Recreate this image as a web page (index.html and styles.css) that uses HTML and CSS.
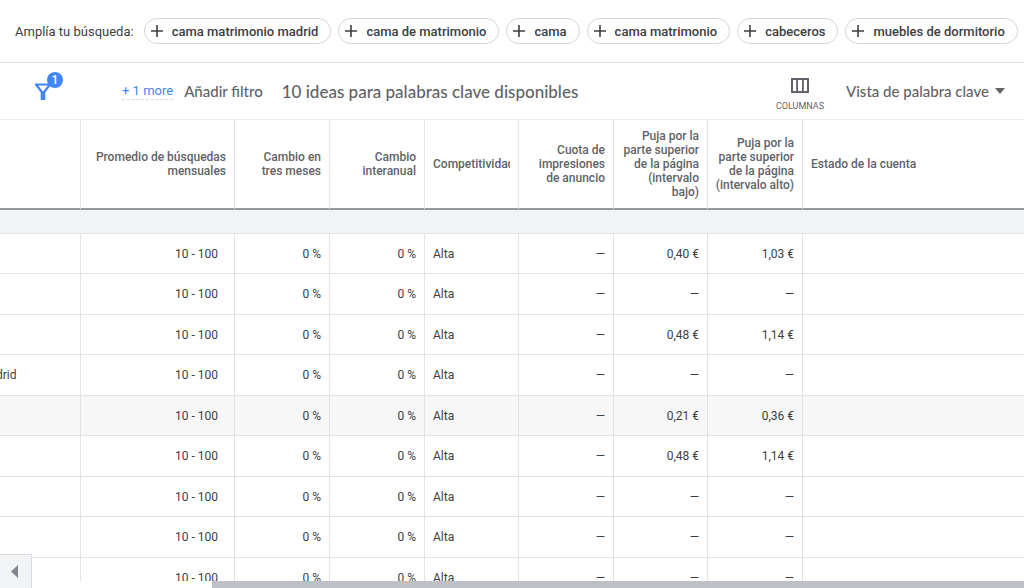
FILE: index.html
```html
<!DOCTYPE html>
<html lang="es">
<head>
    <meta charset="UTF-8">
    <meta name="viewport" content="width=device-width, initial-scale=1.0">
    <title>Ideas para palabras clave</title>
    <link rel="stylesheet" href="styles.css">
</head>
<body>
    <div class="suggestions">
        <span class="suggestions-label">Amplía tu búsqueda:</span>
        <button type="button" class="chip"><svg class="plus" viewBox="0 0 12 12"><path d="M6 0v12M0 6h12"/></svg>cama matrimonio madrid</button>
        <button type="button" class="chip"><svg class="plus" viewBox="0 0 12 12"><path d="M6 0v12M0 6h12"/></svg>cama de matrimonio</button>
        <button type="button" class="chip"><svg class="plus" viewBox="0 0 12 12"><path d="M6 0v12M0 6h12"/></svg>cama</button>
        <button type="button" class="chip"><svg class="plus" viewBox="0 0 12 12"><path d="M6 0v12M0 6h12"/></svg>cama matrimonio</button>
        <button type="button" class="chip"><svg class="plus" viewBox="0 0 12 12"><path d="M6 0v12M0 6h12"/></svg>cabeceros</button>
        <button type="button" class="chip"><svg class="plus" viewBox="0 0 12 12"><path d="M6 0v12M0 6h12"/></svg>muebles de dormitorio</button>
    </div>

    <div class="toolbar">
        <button type="button" class="filter-btn" aria-label="Filtros">
            <svg viewBox="0 0 16 17">
                <path fill-rule="evenodd" d="M0 .5h16v1.500L10.300 9.500V17H5.700V9.500L0 2zM3.200 2.500L8 8.600l4.800-6.100z"/>
            </svg>
            <span class="badge">1</span>
        </button>
        <a href="#" class="more-link">+ 1 more</a>
        <button type="button" class="add-filter">Añadir filtro</button>
        <h1 class="title">10 ideas para palabras clave disponibles</h1>
        <button type="button" class="columns-btn">
            <svg viewBox="0 0 18 15">
                <path fill-rule="evenodd" d="M0 0h18v15H0zM2 2v11h3.200V2zM7 2v11h4V2zM12.800 2v11H16V2z"/>
            </svg>
            COLUMNAS
        </button>
        <div class="view">
            <select class="view-select" aria-label="Vista">
                <option>Vista de palabra clave</option>
            </select>
            <svg class="caret" viewBox="0 0 10 6"><path d="M0 0h10L5 6z"/></svg>
        </div>
    </div>

    <div class="table-area">
        <table class="keywords">
            <colgroup>
                <col class="col-keyword">
                <col class="col-average">
                <col class="col-metric">
                <col class="col-metric">
                <col class="col-narrow">
                <col class="col-metric">
                <col class="col-narrow">
                <col class="col-metric">
                <col>
            </colgroup>
            <thead>
                <tr>
                    <th></th>
                    <th>Promedio de búsquedas mensuales</th>
                    <th>Cambio en tres meses</th>
                    <th>Cambio interanual</th>
                    <th class="left"><div class="clip">Competitividad</div></th>
                    <th>Cuota de impresiones de anuncio</th>
                    <th>Puja por la parte superior de la página (intervalo bajo)</th>
                    <th>Puja por la parte superior de la página (intervalo alto)</th>
                    <th class="left">Estado de la cuenta</th>
                </tr>
                <tr class="group">
                    <td colspan="9"></td>
                </tr>
            </thead>
            <tbody>
                <tr><td></td><td class="average">10 - 100</td><td>0 %</td><td>0 %</td><td class="left">Alta</td><td>—</td><td>0,40 €</td><td>1,03 €</td><td></td></tr>
                <tr><td></td><td class="average">10 - 100</td><td>0 %</td><td>0 %</td><td class="left">Alta</td><td>—</td><td>—</td><td>—</td><td></td></tr>
                <tr><td></td><td class="average">10 - 100</td><td>0 %</td><td>0 %</td><td class="left">Alta</td><td>—</td><td>0,48 €</td><td>1,14 €</td><td></td></tr>
                <tr><td class="keyword"><div class="keyword-end">drid</div></td><td class="average">10 - 100</td><td>0 %</td><td>0 %</td><td class="left">Alta</td><td>—</td><td>—</td><td>—</td><td></td></tr>
                <tr class="active"><td></td><td class="average">10 - 100</td><td>0 %</td><td>0 %</td><td class="left">Alta</td><td>—</td><td>0,21 €</td><td>0,36 €</td><td></td></tr>
                <tr><td></td><td class="average">10 - 100</td><td>0 %</td><td>0 %</td><td class="left">Alta</td><td>—</td><td>0,48 €</td><td>1,14 €</td><td></td></tr>
                <tr><td></td><td class="average">10 - 100</td><td>0 %</td><td>0 %</td><td class="left">Alta</td><td>—</td><td>—</td><td>—</td><td></td></tr>
                <tr><td></td><td class="average">10 - 100</td><td>0 %</td><td>0 %</td><td class="left">Alta</td><td>—</td><td>—</td><td>—</td><td></td></tr>
                <tr><td></td><td class="average">10 - 100</td><td>0 %</td><td>0 %</td><td class="left">Alta</td><td>—</td><td>—</td><td>—</td><td></td></tr>
            </tbody>
        </table>
    </div>

    <div class="scrollbar"><div class="scrollbar-thumb"></div></div>

    <button type="button" class="collapse-btn" aria-label="Contraer">
        <svg viewBox="0 0 7 13"><path d="M7 0v13L0 6.500z"/></svg>
    </button>
</body>
</html>
```

FILE: styles.css
```css
* {
    box-sizing: border-box;
    margin: 0;
    padding: 0;
}

body {
    display: flex;
    flex-direction: column;
    height: 100vh;
    overflow: hidden;
    background-color: #fff;
    color: #3c4043;
    font-family: Roboto, sans-serif;
    font-size: 12px;
}

button,
select {
    border: none;
    background: none;
    color: inherit;
    font-family: inherit;
    cursor: pointer;
}

svg {
    display: block;
    fill: currentColor;
}

/* Suggested keywords */
.suggestions {
    display: flex;
    flex-shrink: 0;
    align-items: center;
    gap: 7px;
    height: 63px;
    padding: 0 0 0 15px;
    border-bottom: 1px solid #dfe1e8;
    white-space: nowrap;
}

.suggestions-label {
    margin-right: 3px;
    font-size: 13px;
}

.chip {
    display: flex;
    flex-shrink: 0;
    align-items: center;
    gap: 9px;
    height: 26px;
    padding: 0 12px 0 6px;
    border: 1px solid #d2d4d7;
    border-radius: 13px;
    font-size: 13px;
    font-weight: 500;
}

.plus {
    width: 12px;
    height: 12px;
    stroke: currentColor;
    stroke-width: 1.6;
}

/* Filter bar */
.toolbar {
    display: flex;
    flex-shrink: 0;
    align-items: center;
    height: 56px;
    padding: 0 19px 0 35px;
    color: #5f6368;
    white-space: nowrap;
}

.filter-btn {
    position: relative;
    margin-right: 71px;
    color: #4285f4;
}

.filter-btn svg {
    width: 16px;
    height: 17px;
}

.badge {
    position: absolute;
    top: -11px;
    left: 12px;
    width: 16px;
    height: 16px;
    border-radius: 50%;
    background-color: #4285f4;
    color: #fff;
    font-size: 12px;
    font-weight: 500;
    line-height: 16px;
}

.more-link {
    margin-right: 11px;
    border-bottom: 1px dashed #d5d9e0;
    color: #4285f4;
    font-size: 13px;
    line-height: 16px;
    text-decoration: none;
}

.add-filter {
    margin-right: 19px;
    font-family: Lato, sans-serif;
    font-size: 15px;
    font-weight: 500;
}

.title {
    flex: 1;
    font-family: Lato, sans-serif;
    font-size: 17px;
    font-weight: 500;
}

.columns-btn {
    display: flex;
    flex-direction: column;
    align-items: center;
    gap: 8px;
    margin-right: 22px;
    padding-top: 6px;
    font-size: 9px;
    line-height: 10px;
}

.columns-btn svg {
    width: 18px;
    height: 15px;
}

.view {
    position: relative;
}

.view-select {
    padding-right: 16px;
    appearance: none;
    font-family: Lato, sans-serif;
    font-size: 15px;
    font-weight: 500;
}

.caret {
    position: absolute;
    top: 6px;
    right: 0;
    width: 10px;
    height: 6px;
    pointer-events: none;
}

/* Keyword table */
.table-area {
    flex: 1;
    min-height: 0;
    overflow: hidden;
}

.keywords {
    width: 100%;
    border-collapse: separate;
    border-spacing: 0;
    table-layout: fixed;
    line-height: 14px;
}

.col-keyword {
    width: 81px;
}

.col-average {
    width: 154px;
}

.col-metric {
    width: 95px;
}

.col-narrow {
    width: 94px;
}

.keywords th,
.keywords td {
    padding: 0 8px;
    border-right: 1px solid #e0e2e6;
    text-align: right;
}

.keywords th:last-child,
.keywords td:last-child {
    border-right: none;
}

.keywords th {
    height: 91px;
    padding-left: 6px;
    border-top: 1px solid #e8eaed;
    border-bottom: 2px solid #96989b;
    color: #5f6368;
    font-weight: 500;
}

.keywords .left {
    padding-left: 8px;
    text-align: left;
}

.keywords .average {
    padding-right: 16px;
}

.keywords .keyword {
    padding: 0;
    text-align: left;
}

/* the keyword column is scrolled, only its tail shows */
.keyword-end {
    margin-left: -4px;
}

.clip {
    overflow: hidden;
    white-space: nowrap;
}

.keywords td {
    height: 40px;
    border-bottom: 1px solid #e0e2e6;
}

.keywords tbody tr:nth-child(even) td {
    height: 41px;
}

.keywords .group td {
    height: 24px;
    background-color: #f1f3f4;
}

.active {
    background-color: #f7f7f7;
}

.scrollbar {
    flex-shrink: 0;
    height: 7px;
    padding-left: 212px;
}

.scrollbar-thumb {
    height: 7px;
    background-color: #bdc1c6;
}

.collapse-btn {
    display: flex;
    position: absolute;
    bottom: 0;
    left: 0;
    align-items: center;
    width: 32px;
    height: 34px;
    padding-left: 11px;
    border-top: 1px solid #dadce0;
    border-right: 1px solid #dadce0;
    background-color: #f1f3f4;
    color: #80868b;
}

.collapse-btn svg {
    width: 7px;
    height: 13px;
}
```
